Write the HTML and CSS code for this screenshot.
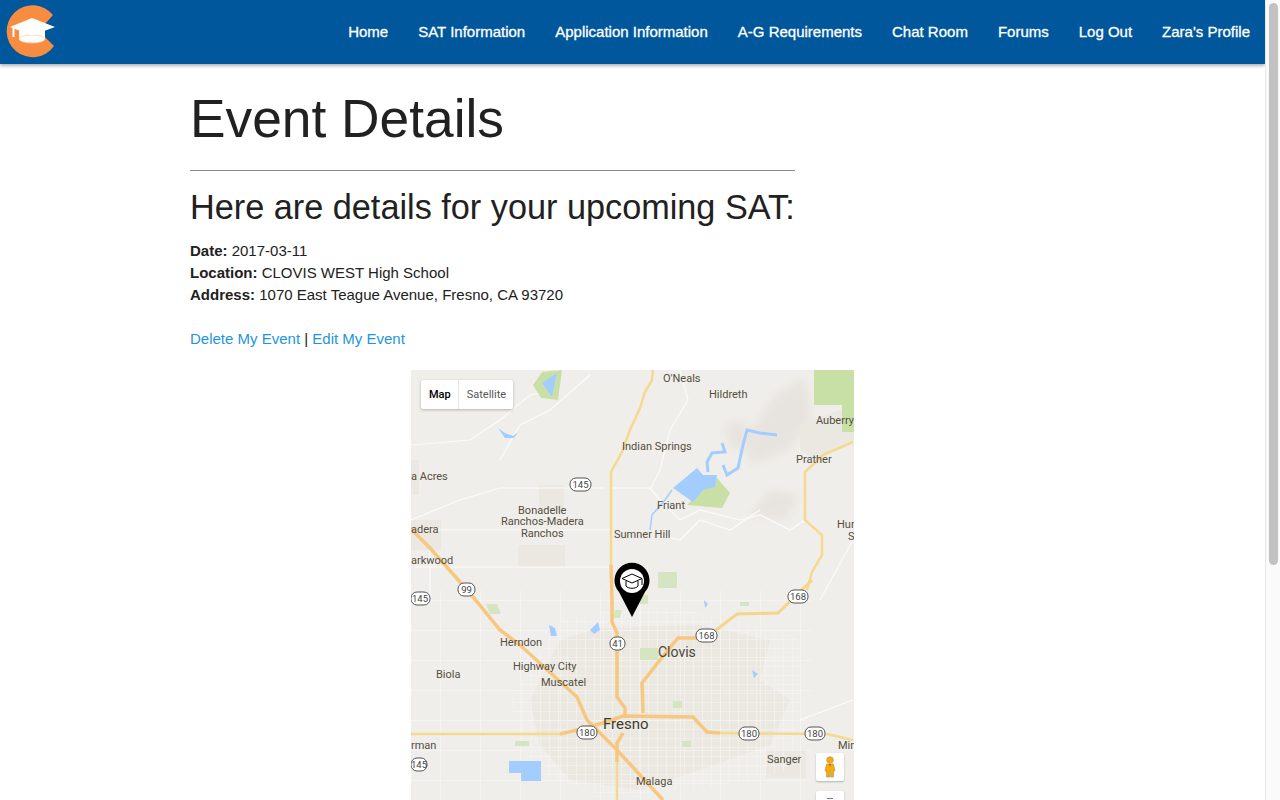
FILE: index.html
```html
<!DOCTYPE html>
<html lang="en">
<head>
<meta charset="utf-8">
<title>Event Details</title>
<link rel="stylesheet" href="styles.css">
</head>
<body>
<div class="window">
  <div class="page">
    <nav class="navbar">
      <a class="logo" href="#" aria-label="Home">
        <svg width="64" height="64" viewBox="0 0 64 64">
          <path class="logo-c" d="M53 15A26 26 0 1 0 54 46L45 37V24Z"/>
          <path class="logo-cap-base" d="M19 28V39H45V28Z"/>
          <ellipse class="logo-cap-rim" cx="32" cy="39" rx="13" ry="4"/>
          <path class="logo-cap-top" d="M32 18L55 27L32 35.500L10 27Z"/>
          <path class="logo-tassel" d="M13.500 27V37"/>
        </svg>
      </a>
      <ul class="nav-links">
        <li><a href="#">Home</a></li>
        <li><a href="#">SAT Information</a></li>
        <li><a href="#">Application Information</a></li>
        <li><a href="#">A-G Requirements</a></li>
        <li><a href="#">Chat Room</a></li>
        <li><a href="#">Forums</a></li>
        <li><a href="#">Log Out</a></li>
        <li><a href="#">Zara's Profile</a></li>
      </ul>
    </nav>
    <main class="container">
      <div class="heading-block">
        <h1>Event Details</h1>
        <hr class="rule">
        <h2>Here are details for your upcoming SAT:</h2>
      </div>
      <p class="details">
        <strong>Date:</strong> 2017-03-11<br>
        <strong>Location:</strong> CLOVIS WEST High School<br>
        <strong>Address:</strong> 1070 East Teague Avenue, Fresno, CA 93720
      </p>
      <p class="actions"><a href="#">Delete My Event</a> | <a href="#">Edit My Event</a></p>
      <div class="map">
        <svg class="map-art" width="443" height="430" viewBox="411 370 443 430">
          <defs>
            <pattern id="grid" width="40" height="30" patternUnits="userSpaceOnUse">
              <path class="grid-line" d="M0 0H40M0 0V30"/>
            </pattern>
            <pattern id="finegrid" width="9" height="9" patternUnits="userSpaceOnUse">
              <path class="grid-line-thin" d="M0 0H9M0 0V9"/>
            </pattern>
            <filter id="soft"><feGaussianBlur stdDeviation="4"/></filter>
          </defs>
          <rect class="land" x="411" y="370" width="443" height="430"/>

          <g class="hills" filter="url(#soft)">
            <path d="M775 395L805 378L812 420L790 450L750 465L745 440Z"/>
            <path d="M770 490L800 495L785 520L750 515Z"/>
            <path d="M725 425L745 420L750 445L730 450Z"/>
          </g>

          <g class="urban">
            <path d="M560 640L600 628L700 625L770 640L760 680L790 700L770 745L700 770L640 790L570 780L540 745L530 700Z"/>
            <rect x="539" y="485" width="25" height="25"/>
            <rect x="518" y="545" width="47" height="22"/>
            <rect x="411" y="460" width="8" height="35"/>
            <rect x="411" y="520" width="30" height="30"/>
            <path d="M800 425L840 410L854 420V440L815 460L800 450Z"/>
            <rect x="766" y="750" width="40" height="28"/>
          </g>

          <rect x="411" y="590" width="400" height="210" fill="url(#grid)"/>
          <path d="M560 620L640 605L720 615L800 640L800 700L790 770L700 790L600 795L530 770L510 700Z" fill="url(#finegrid)"/>

          <g class="minor">
            <path d="M411 520L460 500L500 488H605"/>
            <path d="M420 530H610M430 550V600M415 567H612"/>
            <path d="M411 445L470 440L500 420L530 395L560 390"/>
            <path d="M500 460L520 425L550 410L590 375"/>
            <path d="M610 488H650L660 500L680 520L700 510L740 520L760 515L790 530L805 520"/>
            <path d="M680 370L688 400L670 430L660 470L650 490"/>
            <path d="M660 535L680 540L700 520L730 530L760 510"/>
            <path d="M820 600L853 540M853 700L800 720"/>
          </g>

          <g class="park">
            <path d="M533 385L542 372L562 370L558 400L541 398Z"/>
            <path d="M814 370H854V432H842V405H814Z"/>
            <path d="M687 505L700 492L717 478L730 493L722 508Z"/>
          </g>
          <g class="park-pale">
            <rect x="658" y="572" width="19" height="16"/>
            <rect x="640" y="595" width="8" height="9"/>
            <path d="M486 604H497L501 614H490Z"/>
            <path d="M615 610H622L620 618H613Z"/>
            <rect x="640" y="648" width="18" height="12"/>
            <rect x="515" y="741" width="14" height="5"/>
            <rect x="673" y="701" width="9" height="7"/>
            <rect x="682" y="741" width="9" height="6"/>
            <rect x="740" y="602" width="9" height="4"/>
          </g>

          <g class="water">
            <path d="M673 488L697 468L703 475L717 475L715 487L703 490L693 502Z"/>
            <path d="M542 383L557 373L552 397Z"/>
            <path d="M498 428L505 433L513 436L518 432L514 438H505Z"/>
            <path d="M549 625L555 628L557 636L551 636Z"/>
            <path d="M704 600L708 604L705 608Z"/>
            <path d="M509 761H541V781H521V773H509Z"/>
            <path d="M752 670L758 674L754 678Z"/>
            <path d="M590 630L598 622L600 630L594 634Z"/>
          </g>
          <path class="river" d="M722 443L725 452L712 453L707 462L708 472"/>
          <path class="river" d="M723 465L727 475L738 468L743 445L747 430L760 433L777 435"/>
          <path class="river-thin" d="M650 530L652 515L665 500L672 490"/>

          <g class="hwy-yellow">
            <path d="M653 370L652 380L645 392L640 408L630 430L622 452L611 472V565"/>
            <path d="M853 442L823 455L805 472V520L822 535V555L812 572L807 590"/>
            <path d="M411 734H560"/>
            <path d="M720 733L827 734L853 740"/>
            <path d="M617 760V800"/>
          </g>
          <g class="hwy">
            <path d="M611 565L612 600V622L617 633V697L625 708V715"/>
            <path d="M410 528L430 548L460 582L473 597L500 630L520 645L577 697L587 720L617 750L663 800"/>
            <path d="M560 734L577 730L603 723L623 716L693 717L707 732L720 733"/>
            <path d="M643 713L642 683L660 660L678 638H707"/>
            <path d="M623 733L617 743V762"/>
          </g>
          <path class="hwy-thin" d="M707 637L737 614L778 613L812 580"/>

          <g class="shield">
            <rect x="570" y="478" width="21" height="13" rx="6"/>
            <rect x="411" y="592" width="19" height="13" rx="6"/>
            <rect x="458" y="583" width="17" height="13" rx="6"/>
            <rect x="788" y="590" width="20" height="13" rx="6"/>
            <rect x="696" y="629" width="21" height="13" rx="6"/>
            <rect x="610" y="637" width="15" height="13" rx="6"/>
            <rect x="577" y="726" width="20" height="13" rx="6"/>
            <rect x="739" y="727" width="20" height="13" rx="6"/>
            <rect x="805" y="727" width="20" height="13" rx="6"/>
            <rect x="411" y="758" width="16" height="13" rx="6"/>
          </g>
          <g class="shield-text">
            <text x="580.500" y="488">145</text>
            <text x="420" y="602">145</text>
            <text x="466.500" y="593">99</text>
            <text x="798" y="600">168</text>
            <text x="706.500" y="639">168</text>
            <text x="617.500" y="647">41</text>
            <text x="587" y="736">180</text>
            <text x="749" y="737">180</text>
            <text x="815" y="737">180</text>
            <text x="419" y="768">145</text>
          </g>

          <g class="label">
            <text x="663" y="382">O'Neals</text>
            <text x="709" y="398">Hildreth</text>
            <text x="816" y="424">Auberry</text>
            <text x="622" y="450">Indian Springs</text>
            <text x="796" y="463">Prather</text>
            <text x="411" y="480">a Acres</text>
            <text x="657" y="509">Friant</text>
            <text x="518" y="514">Bonadelle</text>
            <text x="501" y="525">Ranchos-Madera</text>
            <text x="521" y="537">Ranchos</text>
            <text x="614" y="538">Sumner Hill</text>
            <text x="837" y="528">Hur</text>
            <text x="848" y="540">S</text>
            <text x="411" y="533">adera</text>
            <text x="411" y="564">arkwood</text>
            <text x="500" y="646">Herndon</text>
            <text x="513" y="670">Highway City</text>
            <text x="436" y="678">Biola</text>
            <text x="541" y="686">Muscatel</text>
            <text x="411" y="749">rman</text>
            <text x="767" y="763">Sanger</text>
            <text x="636" y="785">Malaga</text>
            <text x="838" y="749">Min</text>
          </g>
          <text class="label-city" x="658" y="657">Clovis</text>
          <text class="label-big" x="603" y="729">Fresno</text>

          <path class="pin" d="M632 617L619 592A17.500 17.500 0 1 1 645 592Z"/>
          <circle class="pin-face" cx="632" cy="581" r="12"/>
          <path class="pin-cap" d="M632 574L642 578.500L632 583L622 578.500ZM626 581V586C628 589 636 589 638 586V581M642 578.500V585"/>
        </svg>

        <div class="map-type">
          <span class="map-type-btn active">Map</span>
          <span class="map-type-btn">Satellite</span>
        </div>
        <div class="pegman">
          <svg width="14" height="22" viewBox="0 0 14 22">
            <circle class="peg-body" cx="7" cy="4" r="3.300"/>
            <path class="peg-body" d="M3.500 8H10.500L12 15H10.500V21H7.500V15H6.500V21H3.500V15H2Z"/>
            <path class="peg-tie" d="M6 8H8L7 11Z"/>
          </svg>
        </div>
        <div class="zoom-btn"><span class="zoom-plus"></span></div>
      </div>
    </main>
  </div>
  <div class="scrollbar"><div class="scroll-thumb"></div></div>
</div>
</body>
</html>
```
FILE: styles.css
```css
* { box-sizing: border-box; }
html, body { margin: 0; height: 100%; overflow: hidden; background: #fff; }
body { font-family: "Liberation Sans", Arial, sans-serif; color: #212121; font-size: 15px; line-height: 22px; }
a { text-decoration: none; }

.window { display: flex; height: 800px; overflow: hidden; }
.page { flex: 1; min-width: 0; }

.scrollbar { width: 15px; background: #fafafa; border-left: 1px solid #e8e8e8; padding: 3px 2px 0 3px; }
.scroll-thumb { height: 562px; background: #c1c1c1; border-radius: 5px; }

.navbar { height: 64px; background: #01579b; display: flex; justify-content: space-between; box-shadow: 0 2px 3px rgba(0,0,0,.3); }
.logo { display: block; width: 64px; height: 64px; }
.logo-c { fill: #f88d42; }
.logo-cap-base { fill: #fff; }
.logo-cap-rim { fill: #fff; stroke: #fbc9a3; stroke-width: .7; }
.logo-cap-top { fill: #fff; }
.logo-tassel { stroke: #fff; stroke-width: 2; fill: none; }

.nav-links { list-style: none; margin: 0; padding: 0; display: flex; }
.nav-links a { display: block; padding: 0 15px; line-height: 64px; color: #fff; font-size: 15px; -webkit-text-stroke: .3px #fff; }

.container { width: 885px; margin: 0 auto; }
.heading-block { display: table; }
h1 { font-size: 53.300px; font-weight: 400; line-height: 64px; margin: 23px 0 0; }
.rule { border: 0; border-top: 1px solid #8a8a8a; margin: 19px 0 0; }
h2 { font-size: 34.250px; font-weight: 400; line-height: 42px; margin: 15px 0 0; white-space: nowrap; }
.details { margin: 12px 0 0; }
.details strong { font-weight: 700; }
.actions { margin: 22px 0 0; }
.actions a { color: #1e95e0; }

.map { position: relative; width: 443px; height: 430px; margin: 20px auto 0; overflow: hidden; }
.map-art { display: block; }

.land { fill: #f0eeea; }
.hills { fill: #e7e4df; }
.urban { fill: #ebe8e2; }
.grid-line { stroke: #f9f8f6; stroke-width: 1; fill: none; }
.grid-line-thin { stroke: #f6f5f1; stroke-width: 1; fill: none; }
.minor { fill: none; stroke: #fbfbf9; stroke-width: 1.200; }
.park { fill: #c8e0a6; }
.park-pale { fill: #d5e5c2; }
.water { fill: #a3ccff; }
.river { fill: none; stroke: #a3ccff; stroke-width: 3; }
.river-thin { fill: none; stroke: #a3ccff; stroke-width: 1.500; }
.hwy-yellow { fill: none; stroke: #f5d98f; stroke-width: 2.500; }
.hwy { fill: none; stroke: #f8c77f; stroke-width: 3.500; }
.hwy-thin { fill: none; stroke: #f6d48a; stroke-width: 3; }
.shield { fill: #fff; stroke: #555; stroke-width: 1; }
.shield-text { font-family: Roboto, sans-serif; font-size: 9.500px; fill: #444; text-anchor: middle; }
.label { font-family: Roboto, sans-serif; font-size: 11px; fill: #544e41; }
.label-city { font-family: Roboto, sans-serif; font-size: 14px; fill: #4a463b; }
.label-big { font-family: Roboto, sans-serif; font-size: 15px; fill: #3f3b32; }
.pin { fill: #000; }
.pin-face { fill: #fff; }
.pin-cap { fill: none; stroke: #000; stroke-width: 1; }

.map-type { position: absolute; left: 10px; top: 10px; display: flex; background: #fff; height: 29px; border-radius: 2px; box-shadow: 0 1px 3px rgba(0,0,0,.25); font-family: Roboto, sans-serif; font-size: 11px; line-height: 29px; }
.map-type-btn { padding: 0 7px 0 8px; color: #565656; }
.map-type-btn.active { color: #000; font-weight: 500; border-right: 1px solid #e6e6e6; }

.pegman { position: absolute; left: 405px; top: 383px; width: 28px; height: 28px; background: #fff; border-radius: 2px; box-shadow: 0 1px 2px rgba(0,0,0,.25); display: flex; align-items: center; justify-content: center; }
.peg-body { fill: #f9ab00; stroke: #a89160; stroke-width: .6; }
.peg-tie { fill: #d9541e; }
.zoom-btn { position: absolute; left: 405px; top: 421px; width: 28px; height: 40px; background: #fff; border-radius: 2px; box-shadow: 0 1px 2px rgba(0,0,0,.25); }
.zoom-plus { display: block; width: 6px; height: 1px; margin: 7px auto 0; background: #777; }
```
